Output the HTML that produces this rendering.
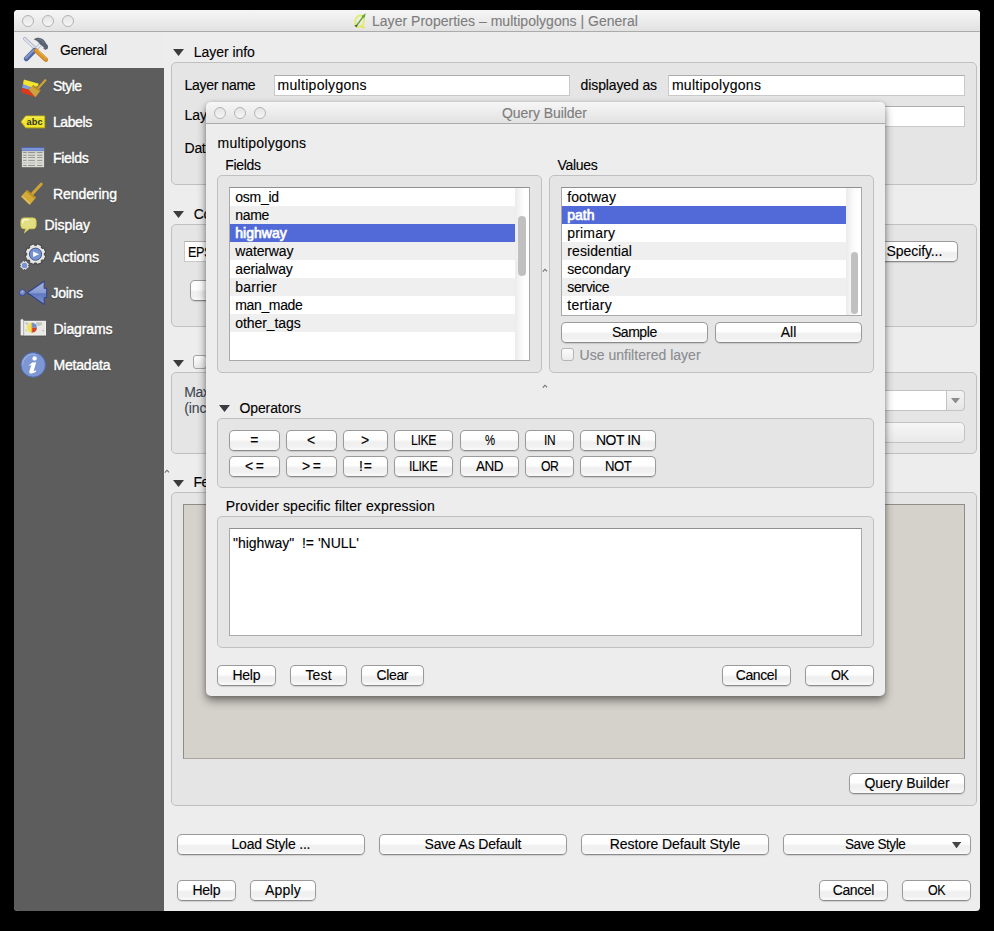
<!DOCTYPE html><html><head><meta charset="utf-8"><title>Layer Properties</title><style>
html,body{margin:0;padding:0;background:#000;}
body{width:994px;height:931px;overflow:hidden;position:relative;font-family:"Liberation Sans",sans-serif;font-size:13px;}
.a,.t,.btn,.gb,.inp,.win,.lst,.row,.dbtn{position:absolute;box-sizing:border-box;}
.t{line-height:16px;white-space:pre;-webkit-text-stroke:0.12px currentColor;}
.win{background:#ededed;}
.gb{background:#e5e5e5;border:1px solid #c0c0c0;border-radius:5px;}
.inp{background:#fff;border:1px solid #c9c9c9;border-top-color:#adadad;}
.btn,.dbtn{border:1px solid #9a9a9a;border-bottom-color:#8a8a8a;border-radius:5px;background:linear-gradient(#ffffff 0%,#fdfdfd 45%,#efefef 58%,#f1f1f1 80%,#fafafa 100%);box-shadow:0 1px 1px rgba(0,0,0,0.13);}
.dbtn{border-color:#c2c2c2;background:linear-gradient(#f6f6f6,#e9e9e9);box-shadow:none;}
.lst{background:#fff;border:1px solid #a9a9a9;border-top-color:#8f8f8f;overflow:hidden;}
.row{left:0;height:18px;}
.sb{color:#fff;-webkit-text-stroke:0.45px #fff;text-shadow:0 1px 1px rgba(0,0,0,.45),0 0 1px rgba(0,0,0,.3);}
</style></head><body>
<div class="win" style="left:14px;top:10px;width:966px;height:901px;border-radius:4px 4px 4px 4px;overflow:hidden">
<div class="a" style="left:-14px;top:-10px;width:994px;height:931px">
<div class="a" style="left:14.0px;top:10.0px;width:966.0px;height:22.0px;background:linear-gradient(#f6f6f6,#e2e2e2);border-bottom:1px solid #ababab;"></div>
<div class="a" style="left:22.0px;top:15.0px;width:12.0px;height:12.0px;border-radius:50%;border:1px solid #b3b3b3;background:linear-gradient(#e4e4e4,#f6f6f6);"></div>
<div class="a" style="left:42.0px;top:15.0px;width:12.0px;height:12.0px;border-radius:50%;border:1px solid #b3b3b3;background:linear-gradient(#e4e4e4,#f6f6f6);"></div>
<div class="a" style="left:62.0px;top:15.0px;width:12.0px;height:12.0px;border-radius:50%;border:1px solid #b3b3b3;background:linear-gradient(#e4e4e4,#f6f6f6);"></div>
<span class="t " style="left:372.0px;top:13.00px;font-size:14px;letter-spacing:0.021px;color:#7d7d7d;">Layer Properties – multipolygons | General</span>
<svg class="a" style="left:345px;top:8px" width="30" height="26" viewBox="0 0 30 26"><ellipse cx="14.6" cy="13.2" rx="4.3" ry="5.8" fill="none" stroke="#e4ec6c" stroke-width="1.9" transform="rotate(12 14.6 13.3)"/><path d="M15.6 17.4 Q17 20 19.6 19.2" fill="none" stroke="#e1ea5c" stroke-width="2"/><path d="M9.2 17.6 L11.6 19.6 L13.2 16.2Z" fill="#4d6b2c"/><path d="M12 17 L18.6 8.2" stroke="#62a034" stroke-width="1.4"/><path d="M20.8 5.2 L16.6 8 L19.4 10.2Z" fill="#5fa82e"/></svg>
<div class="a" style="left:14.0px;top:68.0px;width:150.0px;height:843.0px;background:#5d5d5d;"></div>
<div class="a" style="left:14.0px;top:32.0px;width:150.0px;height:36.0px;background:#ececec;"></div>
<span class="t " style="left:60.4px;top:42.00px;font-size:14px;letter-spacing:-0.450px;color:#000;transform:scaleX(0.9976);transform-origin:0 0;">General</span>
<span class="t sb" style="left:52.9px;top:78.00px;font-size:14px;letter-spacing:-0.450px;color:#fff;transform:scaleX(0.9889);transform-origin:0 0;">Style</span>
<span class="t sb" style="left:53.0px;top:114.00px;font-size:14px;letter-spacing:-0.412px;color:#fff;">Labels</span>
<span class="t sb" style="left:53.0px;top:150.00px;font-size:14px;letter-spacing:-0.310px;color:#fff;">Fields</span>
<span class="t sb" style="left:53.0px;top:186.00px;font-size:14px;letter-spacing:-0.076px;color:#fff;">Rendering</span>
<span class="t sb" style="left:44.4px;top:217.00px;font-size:14px;letter-spacing:-0.051px;color:#fff;">Display</span>
<span class="t sb" style="left:53.3px;top:249.00px;font-size:14px;letter-spacing:-0.036px;color:#fff;">Actions</span>
<span class="t sb" style="left:51.6px;top:285.00px;font-size:14px;letter-spacing:-0.321px;color:#fff;">Joins</span>
<span class="t sb" style="left:53.5px;top:321.00px;font-size:14px;letter-spacing:-0.130px;color:#fff;">Diagrams</span>
<span class="t sb" style="left:53.5px;top:357.00px;font-size:14px;letter-spacing:-0.197px;color:#fff;">Metadata</span>
<svg class="a" style="left:16px;top:32px" width="40" height="40" viewBox="0 0 40 40">
<path d="M8.7 6.7 L19.4 16.7" stroke="#9aa0b6" stroke-width="3.2" stroke-linecap="round"/>
<path d="M8.7 6.7 L19.4 16.7" stroke="#e1e4ee" stroke-width="2" stroke-linecap="round"/>
<path d="M18.4 18.4 L10.3 26.7" stroke="#50669e" stroke-width="5" stroke-linecap="round"/>
<path d="M17.6 18.2 L9.9 26" stroke="#8398cd" stroke-width="2" stroke-linecap="round"/>
<path d="M20.2 16.8 L24.2 12.8" stroke="#b4bccc" stroke-width="3.6"/>
<path d="M20.6 16.4 L24.4 12.6" stroke="#e6e9f2" stroke-width="2"/>
<path d="M17.8 7.4 C20 5 25.4 5 28.2 8.6 C29.4 10.2 30.6 12.4 32 13.8 L31.9 16.6 L29.4 18 L27.4 16.6 L27.7 15.2 L24 12.2 C22.6 9.8 20.4 8.2 17.8 7.4Z" fill="#5a6370"/>
<path d="M21.6 7.4 C24 7 26.6 8.4 28 11" fill="none" stroke="#737c8a" stroke-width="1"/>
<path d="M20.2 18.6 L29.8 27.6" stroke="#c98524" stroke-width="4.6" stroke-linecap="round"/>
<path d="M20.4 18.4 L29.6 27" stroke="#dc9a34" stroke-width="3" stroke-linecap="round"/>
<path d="M22 18.2 L30.4 26" stroke="#f0bb48" stroke-width="1.1" stroke-dasharray=".9 .6"/>
</svg>
<svg class="a" style="left:16px;top:72px" width="40" height="40" viewBox="0 0 40 40">
<path d="M7.9 7.5 L22.8 11.8 L21.5 14.6 L14.5 15.2 L6.9 12.2Z" fill="#f2e62e"/>
<path d="M6.9 12.2 L14.8 15 L12.6 17.8 L6 16.1Z" fill="#7d9fe0"/>
<path d="M6 16.1 L12.8 17.6 L19.2 25.2 L5.2 20.2Z" fill="#dc3a1c"/>
<path d="M22.4 16 L29.3 8.3" stroke="#cfa236" stroke-width="2.3" stroke-linecap="round"/>
<path d="M12.6 17.6 L17.2 13 L24.6 18.6 L19.4 25.2Z" fill="#cda33f"/>
<path d="M17.2 13 L24.6 18.6 L23.6 19.8 L16.2 14.2Z" fill="#b98c22"/>
</svg>
<svg class="a" style="left:16px;top:104px" width="40" height="40" viewBox="0 0 40 40">
<path d="M5.1 17.85 L9.7 12 H28.7 V23.8 H9.7Z" fill="#efe62c" stroke="#c9b505" stroke-width=".9" stroke-linejoin="round"/>
<path d="M6.8 17.8 L10.2 13.2 H27.6" fill="none" stroke="#f8f27a" stroke-width=".9"/>
<text x="10.6" y="21.1" font-family="Liberation Sans" font-weight="bold" font-size="9.4" fill="#33342a" textLength="16" lengthAdjust="spacingAndGlyphs">abc</text>
</svg>
<svg class="a" style="left:16px;top:140px" width="40" height="40" viewBox="0 0 40 40">
<defs><linearGradient id="gf" x1="0" y1="0" x2="0" y2="1"><stop offset="0" stop-color="#b4b5ae"/><stop offset=".4" stop-color="#dcddd6"/><stop offset="1" stop-color="#d9dad3"/></linearGradient></defs>
<rect x="5.9" y="7.2" width="22.2" height="20" fill="url(#gf)"/>
<rect x="5.9" y="7.2" width="22.2" height="3.8" fill="#6c88cf"/>
<rect x="5.9" y="7.2" width="22.2" height="1.1" fill="#48599c"/>
<rect x="5.9" y="8.3" width="22.2" height="1.2" fill="#8aa2de"/>
<path d="M7.2 12.5H10.6M12.2 12.5H19M21.2 12.5H26.4" stroke="#8d8e87" stroke-width=".9"/><path d="M7.2 15.3H10.6M12.2 15.3H19M21.2 15.3H26.4" stroke="#8d8e87" stroke-width=".9"/><path d="M7.2 17.5H10.6M12.2 17.5H19M21.2 17.5H26.4" stroke="#8d8e87" stroke-width=".9"/><path d="M7.2 20.4H10.6M12.2 20.4H19M21.2 20.4H26.4" stroke="#8d8e87" stroke-width=".9"/><path d="M7.2 25.5H10.6M12.2 25.5H19M21.2 25.5H26.4" stroke="#8d8e87" stroke-width=".9"/><path d="M7.2 23H10.6M12.2 23H19M21.2 23H26.4" stroke="#bcbdb5" stroke-width="1.2"/>
</svg>
<svg class="a" style="left:16px;top:174px" width="40" height="40" viewBox="0 0 40 40">
<path d="M25.2 10.2 L16.6 19.6" stroke="#d0a434" stroke-width="3" stroke-linecap="round"/>
<path d="M11 16 L20.1 23.6 L13.7 31.1 L4.9 22.6Z" fill="#d3aa3a"/>
<path d="M11 16 L20.1 23.6 L18.9 25 L9.8 17.3Z" fill="#bb8f1e"/>
<path d="M6.4 22.4 L13.6 29.4" stroke="#e6c868" stroke-width="1.2"/>
</svg>
<svg class="a" style="left:16px;top:208px" width="40" height="40" viewBox="0 0 40 40">
<path d="M8 9.9 H17 Q20.1 9.9 20.1 13 V17.6 Q20.1 20.7 17 20.7 H13.2 L8.4 24.8 L10 20.7 H8 Q4.9 20.7 4.9 17.6 V13 Q4.9 9.9 8 9.9Z" fill="#e2df82" stroke="#d6cc4e" stroke-width=".9"/>
<path d="M6.6 15 Q6.4 11.8 9.4 11.6 H12.4" fill="none" stroke="#fbfbe6" stroke-width="1.1" stroke-linecap="round"/>
</svg>
<svg class="a" style="left:16px;top:238px" width="40" height="40" viewBox="0 0 40 40">
<path d="M29.87 17.84 L27.99 22.37 L26.27 21.98 L25.28 22.97 L25.67 24.69 L21.14 26.57 L20.20 25.07 L18.80 25.07 L17.86 26.57 L13.33 24.69 L13.72 22.97 L12.73 21.98 L11.01 22.37 L9.13 17.84 L10.63 16.90 L10.63 15.50 L9.13 14.56 L11.01 10.03 L12.73 10.42 L13.72 9.43 L13.33 7.71 L17.86 5.83 L18.80 7.33 L20.20 7.33 L21.14 5.83 L25.67 7.71 L25.28 9.43 L26.27 10.42 L27.99 10.03 L29.87 14.56 L28.37 15.50 L28.37 16.90Z" fill="#e6e6e6" stroke="#484848" stroke-width="1.1" stroke-linejoin="round"/>
<circle cx="19.5" cy="16.2" r="6.1" fill="#7693d4" stroke="#46567e" stroke-width="1"/>
<path d="M17.1 13.6 V19 L23 16.3Z" fill="#fff"/>
<path d="M13.34 28.17 L12.46 30.28 L11.62 30.06 L11.16 30.52 L11.38 31.36 L9.27 32.24 L8.82 31.49 L8.18 31.49 L7.73 32.24 L5.62 31.36 L5.84 30.52 L5.38 30.06 L4.54 30.28 L3.66 28.17 L4.41 27.72 L4.41 27.08 L3.66 26.63 L4.54 24.52 L5.38 24.74 L5.84 24.28 L5.62 23.44 L7.73 22.56 L8.18 23.31 L8.82 23.31 L9.27 22.56 L11.38 23.44 L11.16 24.28 L11.62 24.74 L12.46 24.52 L13.34 26.63 L12.59 27.08 L12.59 27.72Z" fill="#e0e0e0" stroke="#4d4d4d" stroke-width=".9" stroke-linejoin="round"/>
<circle cx="8.5" cy="27.4" r="2.7" fill="#7693d4"/>
</svg>
<svg class="a" style="left:16px;top:274px" width="40" height="40" viewBox="0 0 40 40">
<defs><linearGradient id="gj" x1="0" y1="0" x2="0" y2="1"><stop offset="0" stop-color="#a9b9e0"/><stop offset=".5" stop-color="#8699d2"/><stop offset=".54" stop-color="#5f77be"/><stop offset="1" stop-color="#8296d6"/></linearGradient>
<radialGradient id="gj2" cx=".5" cy=".35" r=".6"><stop offset="0" stop-color="#a4b2e0"/><stop offset="1" stop-color="#5068b2"/></radialGradient></defs>
<circle cx="6.4" cy="18.7" r="3.2" fill="url(#gj2)" stroke="#3a4b8e" stroke-width=".9"/>
<path d="M11.3 18.7 L28.2 7.2 V14.1 L30.7 14.4 V23.4 L28.2 23.8 V30.5Z" fill="url(#gj)" stroke="#34448a" stroke-width="1.1" stroke-linejoin="round"/>
</svg>
<svg class="a" style="left:16px;top:310px" width="40" height="40" viewBox="0 0 40 40">
<rect x="7" y="10.8" width="23" height="15" fill="#f4f4f2"/>
<rect x="8" y="11.6" width="21.4" height="13.2" fill="#e9e9e5"/>
<path d="M20 12.4 q3 -.8 6 .2 q1 2 -1 3 q-3 1 -5 -.6Z M9 12.6 q2 -.6 3.4 .2 q0 1.6 -1.6 2.4Z M26 20 q1.6 -.6 2.6 .6 q-.6 1.2 -2.2 .8Z M9.4 19 q1.2 .2 1.4 2.6 q-1 .4 -1.4 -1Z" fill="#c5c8c2"/>
<path d="M7.6 10.8 V25.8" stroke="#6a6a6a" stroke-width=".7"/><rect x="4.8" y="9.2" width="2.4" height="16.6" rx="1" fill="#f2f2f0" stroke="#d0d0cc" stroke-width=".4"/>
<path d="M15.9 12.8 A5 5 0 0 0 15.9 22.8Z" fill="#f0e256"/>
<path d="M15.9 12.8 A5 5 0 0 1 20.9 17.8 H15.9Z" fill="#6a8bd6"/>
<path d="M20.9 17.8 A5 5 0 0 1 15.9 22.8 V17.8Z" fill="#d9402c"/>
<path d="M15.9 12.8 V22.8" stroke="#d8a030" stroke-width=".7"/>
<path d="M4.8 26.1 H30" stroke="#4c4c4c" stroke-width=".8"/>
</svg>
<svg class="a" style="left:16px;top:346px" width="40" height="40" viewBox="0 0 40 40">
<circle cx="17.2" cy="18.9" r="12.3" fill="#7c97d3" stroke="#506ab2" stroke-width="1"/>
<path d="M6.6 19 A10.6 10.6 0 0 1 20 8.6" fill="none" stroke="#9ab0e2" stroke-width="1.2"/>
<circle cx="18.6" cy="12.4" r="2.2" fill="#fff"/>
<path d="M13 19.2 L16.2 16.6 L20.2 16.2 L17.6 25.2 L20.2 24.2 L20 25.8 Q17 28 14.2 27.4 Q12.8 27 13.4 25 L15.4 19 L13.4 19.8Z" fill="#fff"/>
</svg>
<svg class="a" style="left:173.2px;top:49.3px" width="11" height="7" viewBox="0 0 11 7"><path d="M0 0H11L5.5 7Z" fill="#3c3c3c"/></svg>
<span class="t " style="left:193.8px;top:44.00px;font-size:14px;letter-spacing:-0.054px;color:#000;">Layer info</span>
<div class="gb" style="left:171.0px;top:62.0px;width:806.0px;height:123.0px;"></div>
<span class="t " style="left:184.6px;top:77.00px;font-size:14px;letter-spacing:-0.326px;color:#000;">Layer name</span>
<div class="inp" style="left:274.0px;top:75.0px;width:296.0px;height:21.0px;"></div>
<span class="t " style="left:277.6px;top:77.00px;font-size:14px;letter-spacing:0.283px;color:#000;">multipolygons</span>
<span class="t " style="left:580.6px;top:77.00px;font-size:14px;letter-spacing:-0.121px;color:#000;">displayed as</span>
<div class="inp" style="left:668.0px;top:75.0px;width:297.0px;height:21.0px;"></div>
<span class="t " style="left:671.9px;top:77.00px;font-size:14px;letter-spacing:0.283px;color:#000;">multipolygons</span>
<span class="t " style="left:184.6px;top:107.00px;font-size:14px;letter-spacing:-0.085px;color:#000;">Layer source</span>
<div class="inp" style="left:274.0px;top:106.0px;width:691.0px;height:21.0px;"></div>
<span class="t " style="left:184.6px;top:140.00px;font-size:14px;letter-spacing:-0.327px;color:#000;">Data source encoding</span>
<svg class="a" style="left:173.2px;top:211.2px" width="11" height="7" viewBox="0 0 11 7"><path d="M0 0H11L5.5 7Z" fill="#3c3c3c"/></svg>
<span class="t " style="left:193.8px;top:206.00px;font-size:14px;letter-spacing:-0.376px;color:#000;">Coordinate reference system</span>
<div class="gb" style="left:171.0px;top:224.0px;width:806.0px;height:103.0px;"></div>
<div class="inp" style="left:184.0px;top:241.0px;width:681.0px;height:21.0px;"></div>
<span class="t " style="left:188.0px;top:244.00px;font-size:14px;letter-spacing:-0.450px;color:#000;transform:scaleX(0.9039);transform-origin:0 0;">EPSG:4326 - WGS 84</span>
<div class="btn" style="left:871px;top:241px;width:87px;height:21px;"></div>
<span class="t " style="left:886.6px;top:243.00px;font-size:14px;letter-spacing:-0.094px;color:#000;">Specify...</span>
<div class="btn" style="left:190px;top:280px;width:330px;height:21px;"></div>
<svg class="a" style="left:173.2px;top:360.0px" width="11" height="7" viewBox="0 0 11 7"><path d="M0 0H11L5.5 7Z" fill="#3c3c3c"/></svg>
<div class="a" style="left:193.0px;top:355.0px;width:14.0px;height:14.0px;border:1px solid #a3a3a3;border-radius:3px;background:linear-gradient(#fff,#e8e8e8);"></div>
<div class="gb" style="left:171.0px;top:372.0px;width:806.0px;height:82.0px;"></div>
<span class="t " style="left:184.2px;top:384.00px;font-size:14px;letter-spacing:-0.445px;color:#3f4650;">Maximum</span>
<span class="t " style="left:184.2px;top:400.00px;font-size:14px;letter-spacing:-0.102px;color:#3f4650;">(inclusive)</span>
<div class="a" style="left:700.0px;top:390.0px;width:265.0px;height:21.0px;background:#fff;border:1px solid #c3c3c3;border-radius:4px;"></div>
<div class="a" style="left:946.0px;top:390.0px;width:19.0px;height:21.0px;background:linear-gradient(#f4f4f4,#e6e6e6);border:1px solid #c3c3c3;border-radius:0 4px 4px 0;"></div>
<svg class="a" style="left:951.0px;top:397.5px" width="9" height="5.5" viewBox="0 0 9 5.5"><path d="M0 0H9L4.5 5.5Z" fill="#8c8c8c"/></svg>
<div class="dbtn" style="left:700.0px;top:422.0px;width:265.0px;height:21.0px;"></div>
<svg class="a" style="left:164px;top:468.5px" width="6" height="5" viewBox="0 0 6 5"><path d="M0.8 3.6 L3 1.2 L5 3.4" fill="none" stroke="#6e6e6e" stroke-width="1.1"/></svg>
<svg class="a" style="left:173.2px;top:479.6px" width="11" height="7" viewBox="0 0 11 7"><path d="M0 0H11L5.5 7Z" fill="#3c3c3c"/></svg>
<span class="t " style="left:193.4px;top:474.00px;font-size:14px;letter-spacing:-0.415px;color:#000;">Feature subset</span>
<div class="gb" style="left:171.0px;top:492.0px;width:806.0px;height:314.0px;"></div>
<div class="a" style="left:183.0px;top:504.0px;width:782.0px;height:255.0px;background:#d5d1cb;border:1px solid #8f8d89;border-bottom-color:#a9a6a1;"></div>
<div class="btn" style="left:849px;top:773px;width:116px;height:21px;"></div>
<span class="t " style="left:864.4px;top:775.00px;font-size:14px;letter-spacing:-0.025px;color:#000;">Query Builder</span>
<div class="btn" style="left:177px;top:834px;width:188px;height:21px;"></div>
<span class="t " style="left:231.5px;top:836.00px;font-size:14px;letter-spacing:-0.210px;color:#000;">Load Style ...</span>
<div class="btn" style="left:379px;top:834px;width:188px;height:21px;"></div>
<span class="t " style="left:424.5px;top:836.00px;font-size:14px;letter-spacing:-0.188px;color:#000;">Save As Default</span>
<div class="btn" style="left:581px;top:834px;width:188px;height:21px;"></div>
<span class="t " style="left:609.8px;top:836.00px;font-size:14px;letter-spacing:-0.095px;color:#000;">Restore Default Style</span>
<div class="btn" style="left:783px;top:834px;width:188px;height:21px;"></div>
<span class="t " style="left:845.4px;top:836.00px;font-size:14px;letter-spacing:-0.450px;color:#000;transform:scaleX(0.9669);transform-origin:0 0;">Save Style</span>
<svg class="a" style="left:952.0px;top:842.0px" width="9.2" height="6.4" viewBox="0 0 9.2 6.4"><path d="M0 0H9.2L4.6 6.4Z" fill="#454545"/></svg>
<div class="btn" style="left:177px;top:880px;width:59px;height:21px;"></div>
<span class="t " style="left:192.5px;top:882.00px;font-size:14px;letter-spacing:-0.266px;color:#000;">Help</span>
<div class="btn" style="left:250px;top:880px;width:66px;height:21px;"></div>
<span class="t " style="left:265.1px;top:882.00px;font-size:14px;letter-spacing:0.169px;color:#000;">Apply</span>
<div class="btn" style="left:819px;top:880px;width:69px;height:21px;"></div>
<span class="t " style="left:832.8px;top:882.00px;font-size:14px;letter-spacing:-0.417px;color:#000;">Cancel</span>
<div class="btn" style="left:902px;top:880px;width:69px;height:21px;"></div>
<span class="t " style="left:927.7px;top:882.00px;font-size:14px;letter-spacing:-0.450px;color:#000;transform:scaleX(0.8899);transform-origin:0 0;">OK</span>
</div></div>
<div class="win" style="left:206px;top:102px;width:679px;height:594px;border-radius:5px 5px 5px 5px;box-shadow:0 5px 10px rgba(0,0,0,.42),0 1px 4px rgba(0,0,0,.22);overflow:hidden">
<div class="a" style="left:-206px;top:-102px;width:994px;height:931px">
<div class="a" style="left:206.0px;top:102.0px;width:679.0px;height:22.0px;background:linear-gradient(#f6f6f6,#e2e2e2);border-bottom:1px solid #ababab;"></div>
<div class="a" style="left:214.0px;top:107.0px;width:12.0px;height:12.0px;border-radius:50%;border:1px solid #b3b3b3;background:linear-gradient(#e4e4e4,#f6f6f6);"></div>
<div class="a" style="left:234.0px;top:107.0px;width:12.0px;height:12.0px;border-radius:50%;border:1px solid #b3b3b3;background:linear-gradient(#e4e4e4,#f6f6f6);"></div>
<div class="a" style="left:254.0px;top:107.0px;width:12.0px;height:12.0px;border-radius:50%;border:1px solid #b3b3b3;background:linear-gradient(#e4e4e4,#f6f6f6);"></div>
<span class="t " style="left:502.0px;top:105.00px;font-size:14px;letter-spacing:-0.050px;color:#7d7d7d;">Query Builder</span>
<span class="t " style="left:217.5px;top:135.00px;font-size:14px;letter-spacing:0.241px;color:#000;">multipolygons</span>
<span class="t " style="left:225.2px;top:157.00px;font-size:14px;letter-spacing:-0.310px;color:#000;">Fields</span>
<span class="t " style="left:557.4px;top:157.00px;font-size:14px;letter-spacing:-0.294px;color:#000;">Values</span>
<div class="gb" style="left:217.0px;top:175.0px;width:325.0px;height:198.0px;"></div>
<div class="gb" style="left:549.0px;top:175.0px;width:325.0px;height:198.0px;"></div>
<div class="lst" style="left:229px;top:187px;width:301px;height:174px">
<div class="row a" style="top:0px;width:285px;background:#fff"></div>
<div class="row a" style="top:18px;width:285px;background:#efefef"></div>
<div class="row a" style="top:36px;width:285px;background:#516ad8"></div>
<div class="row a" style="top:54px;width:285px;background:#efefef"></div>
<div class="row a" style="top:72px;width:285px;background:#fff"></div>
<div class="row a" style="top:90px;width:285px;background:#efefef"></div>
<div class="row a" style="top:108px;width:285px;background:#fff"></div>
<div class="row a" style="top:126px;width:285px;background:#efefef"></div>
<div class="a" style="left:285px;top:0;width:15px;height:172px;background:linear-gradient(90deg,#ebebeb,#fafafa 45%,#fff 70%)"></div>
<div class="a" style="left:288.4px;top:28.2px;width:7.6px;height:60px;border-radius:4px;background:#c0c0c0"></div>
</div>
<span class="t " style="left:235.3px;top:189.00px;font-size:14px;letter-spacing:-0.267px;color:#000;">osm_id</span>
<span class="t " style="left:235.3px;top:207.00px;font-size:14px;letter-spacing:-0.341px;color:#000;">name</span>
<span class="t " style="left:235.3px;top:225.00px;font-size:14px;letter-spacing:0.005px;color:#fff;-webkit-text-stroke:0.7px #fff;">highway</span>
<span class="t " style="left:235.3px;top:243.00px;font-size:14px;letter-spacing:-0.148px;color:#000;">waterway</span>
<span class="t " style="left:235.3px;top:261.00px;font-size:14px;letter-spacing:-0.206px;color:#000;">aerialway</span>
<span class="t " style="left:235.3px;top:279.00px;font-size:14px;letter-spacing:0.157px;color:#000;">barrier</span>
<span class="t " style="left:235.3px;top:297.00px;font-size:14px;letter-spacing:-0.364px;color:#000;">man_made</span>
<span class="t " style="left:235.3px;top:315.00px;font-size:14px;letter-spacing:-0.074px;color:#000;">other_tags</span>
<div class="lst" style="left:561px;top:187px;width:301px;height:129px">
<div class="row a" style="top:0px;width:284px;background:#fff"></div>
<div class="row a" style="top:18px;width:284px;background:#516ad8"></div>
<div class="row a" style="top:36px;width:284px;background:#fff"></div>
<div class="row a" style="top:54px;width:284px;background:#efefef"></div>
<div class="row a" style="top:72px;width:284px;background:#fff"></div>
<div class="row a" style="top:90px;width:284px;background:#efefef"></div>
<div class="row a" style="top:108px;width:284px;background:#fff"></div>
<div class="a" style="left:284px;top:0;width:16px;height:127px;background:linear-gradient(90deg,#ebebeb,#fafafa 45%,#fff 70%)"></div>
<div class="a" style="left:288.6px;top:64px;width:7.6px;height:61.5px;border-radius:4px;background:#c0c0c0"></div>
</div>
<span class="t " style="left:567.3px;top:189.00px;font-size:14px;letter-spacing:0.058px;color:#000;">footway</span>
<span class="t " style="left:567.3px;top:207.00px;font-size:14px;letter-spacing:-0.017px;color:#fff;-webkit-text-stroke:0.7px #fff;">path</span>
<span class="t " style="left:567.3px;top:225.00px;font-size:14px;letter-spacing:0.171px;color:#000;">primary</span>
<span class="t " style="left:567.3px;top:243.00px;font-size:14px;letter-spacing:0.078px;color:#000;">residential</span>
<span class="t " style="left:567.3px;top:261.00px;font-size:14px;letter-spacing:-0.187px;color:#000;">secondary</span>
<span class="t " style="left:567.3px;top:279.00px;font-size:14px;letter-spacing:-0.358px;color:#000;">service</span>
<span class="t " style="left:567.3px;top:297.00px;font-size:14px;letter-spacing:0.230px;color:#000;">tertiary</span>
<div class="btn" style="left:561px;top:322px;width:147px;height:21px;"></div>
<span class="t " style="left:611.9px;top:324.00px;font-size:14px;letter-spacing:-0.435px;color:#000;">Sample</span>
<div class="btn" style="left:715px;top:322px;width:147px;height:21px;"></div>
<span class="t " style="left:780.7px;top:324.00px;font-size:14px;letter-spacing:0.020px;color:#000;">All</span>
<div class="a" style="left:561.0px;top:348.0px;width:13.0px;height:13.0px;border:1px solid #b5b5b5;border-radius:3px;background:linear-gradient(#fbfbfb,#ececec);"></div>
<span class="t " style="left:579.6px;top:347.00px;font-size:14px;letter-spacing:0.020px;color:#8a8c90;">Use unfiltered layer</span>
<svg class="a" style="left:542px;top:267.5px" width="6" height="5" viewBox="0 0 6 5"><path d="M0.8 3.6 L3 1.2 L5 3.4" fill="none" stroke="#6e6e6e" stroke-width="1.1"/></svg>
<svg class="a" style="left:542px;top:383.5px" width="6" height="5" viewBox="0 0 6 5"><path d="M0.8 3.6 L3 1.2 L5 3.4" fill="none" stroke="#6e6e6e" stroke-width="1.1"/></svg>
<svg class="a" style="left:219.3px;top:405.0px" width="11" height="7" viewBox="0 0 11 7"><path d="M0 0H11L5.5 7Z" fill="#3c3c3c"/></svg>
<span class="t " style="left:239.4px;top:400.00px;font-size:14px;letter-spacing:-0.094px;color:#000;">Operators</span>
<div class="gb" style="left:217.0px;top:418.0px;width:657.0px;height:70.0px;"></div>
<div class="btn" style="left:229px;top:430px;width:51px;height:21px;"></div>
<span class="t " style="left:250.2px;top:432.00px;font-size:14px;letter-spacing:0.424px;color:#000;">=</span>
<div class="btn" style="left:286px;top:430px;width:51px;height:21px;"></div>
<span class="t " style="left:307.1px;top:432.00px;font-size:14px;letter-spacing:0.624px;color:#000;">&lt;</span>
<div class="btn" style="left:343px;top:430px;width:45px;height:21px;"></div>
<span class="t " style="left:361.1px;top:432.00px;font-size:14px;letter-spacing:0.624px;color:#000;">&gt;</span>
<div class="btn" style="left:394px;top:430px;width:59px;height:21px;"></div>
<span class="t " style="left:410.8px;top:432.00px;font-size:14px;letter-spacing:-0.450px;color:#000;transform:scaleX(0.8758);transform-origin:0 0;">LIKE</span>
<div class="btn" style="left:460px;top:430px;width:59px;height:21px;"></div>
<span class="t " style="left:484.6px;top:432.00px;font-size:14px;letter-spacing:-0.450px;color:#000;transform:scaleX(0.8084);transform-origin:0 0;">%</span>
<div class="btn" style="left:525px;top:430px;width:49px;height:21px;"></div>
<span class="t " style="left:543.8px;top:432.00px;font-size:14px;letter-spacing:-0.450px;color:#000;transform:scaleX(0.8486);transform-origin:0 0;">IN</span>
<div class="btn" style="left:580px;top:430px;width:76px;height:21px;"></div>
<span class="t " style="left:595.6px;top:432.00px;font-size:14px;letter-spacing:-0.450px;color:#000;transform:scaleX(0.9945);transform-origin:0 0;">NOT IN</span>
<div class="btn" style="left:229px;top:456px;width:51px;height:21px;"></div>
<span class="t " style="left:245.1px;top:458.00px;font-size:14px;letter-spacing:2.448px;color:#000;">&lt;=</span>
<div class="btn" style="left:286px;top:456px;width:51px;height:21px;"></div>
<span class="t " style="left:302.1px;top:458.00px;font-size:14px;letter-spacing:2.448px;color:#000;">&gt;=</span>
<div class="btn" style="left:343px;top:456px;width:45px;height:21px;"></div>
<span class="t " style="left:359.0px;top:458.00px;font-size:14px;letter-spacing:0.934px;color:#000;">!=</span>
<div class="btn" style="left:394px;top:456px;width:59px;height:21px;"></div>
<span class="t " style="left:409.1px;top:458.00px;font-size:14px;letter-spacing:-0.450px;color:#000;transform:scaleX(0.8877);transform-origin:0 0;">ILIKE</span>
<div class="btn" style="left:460px;top:456px;width:59px;height:21px;"></div>
<span class="t " style="left:475.8px;top:458.00px;font-size:14px;letter-spacing:-0.450px;color:#000;transform:scaleX(0.9595);transform-origin:0 0;">AND</span>
<div class="btn" style="left:525px;top:456px;width:49px;height:21px;"></div>
<span class="t " style="left:540.5px;top:458.00px;font-size:14px;letter-spacing:-0.450px;color:#000;transform:scaleX(0.8710);transform-origin:0 0;">OR</span>
<div class="btn" style="left:580px;top:456px;width:76px;height:21px;"></div>
<span class="t " style="left:604.6px;top:458.00px;font-size:14px;letter-spacing:-0.450px;color:#000;transform:scaleX(0.9353);transform-origin:0 0;">NOT</span>
<span class="t " style="left:225.8px;top:498.00px;font-size:14px;letter-spacing:0.128px;color:#000;">Provider specific filter expression</span>
<div class="gb" style="left:217.0px;top:516.0px;width:657.0px;height:132.0px;"></div>
<div class="inp" style="left:229.0px;top:528.0px;width:633.0px;height:108.0px;border-color:#a9a9a9;border-top-color:#8f8f8f;"></div>
<span class="t " style="left:233.0px;top:535.00px;font-size:14px;letter-spacing:-0.010px;color:#000;">"highway"  != 'NULL'</span>
<div class="btn" style="left:217px;top:665px;width:59px;height:21px;"></div>
<span class="t " style="left:232.5px;top:667.00px;font-size:14px;letter-spacing:-0.266px;color:#000;">Help</span>
<div class="btn" style="left:290px;top:665px;width:57px;height:21px;"></div>
<span class="t " style="left:305.4px;top:667.00px;font-size:14px;letter-spacing:0.173px;color:#000;">Test</span>
<div class="btn" style="left:361px;top:665px;width:63px;height:21px;"></div>
<span class="t " style="left:376.5px;top:667.00px;font-size:14px;letter-spacing:-0.365px;color:#000;">Clear</span>
<div class="btn" style="left:722px;top:665px;width:69px;height:21px;"></div>
<span class="t " style="left:735.8px;top:667.00px;font-size:14px;letter-spacing:-0.417px;color:#000;">Cancel</span>
<div class="btn" style="left:805px;top:665px;width:69px;height:21px;"></div>
<span class="t " style="left:830.5px;top:667.00px;font-size:14px;letter-spacing:-0.450px;color:#000;transform:scaleX(0.9101);transform-origin:0 0;">OK</span>
</div></div>
</body></html>
